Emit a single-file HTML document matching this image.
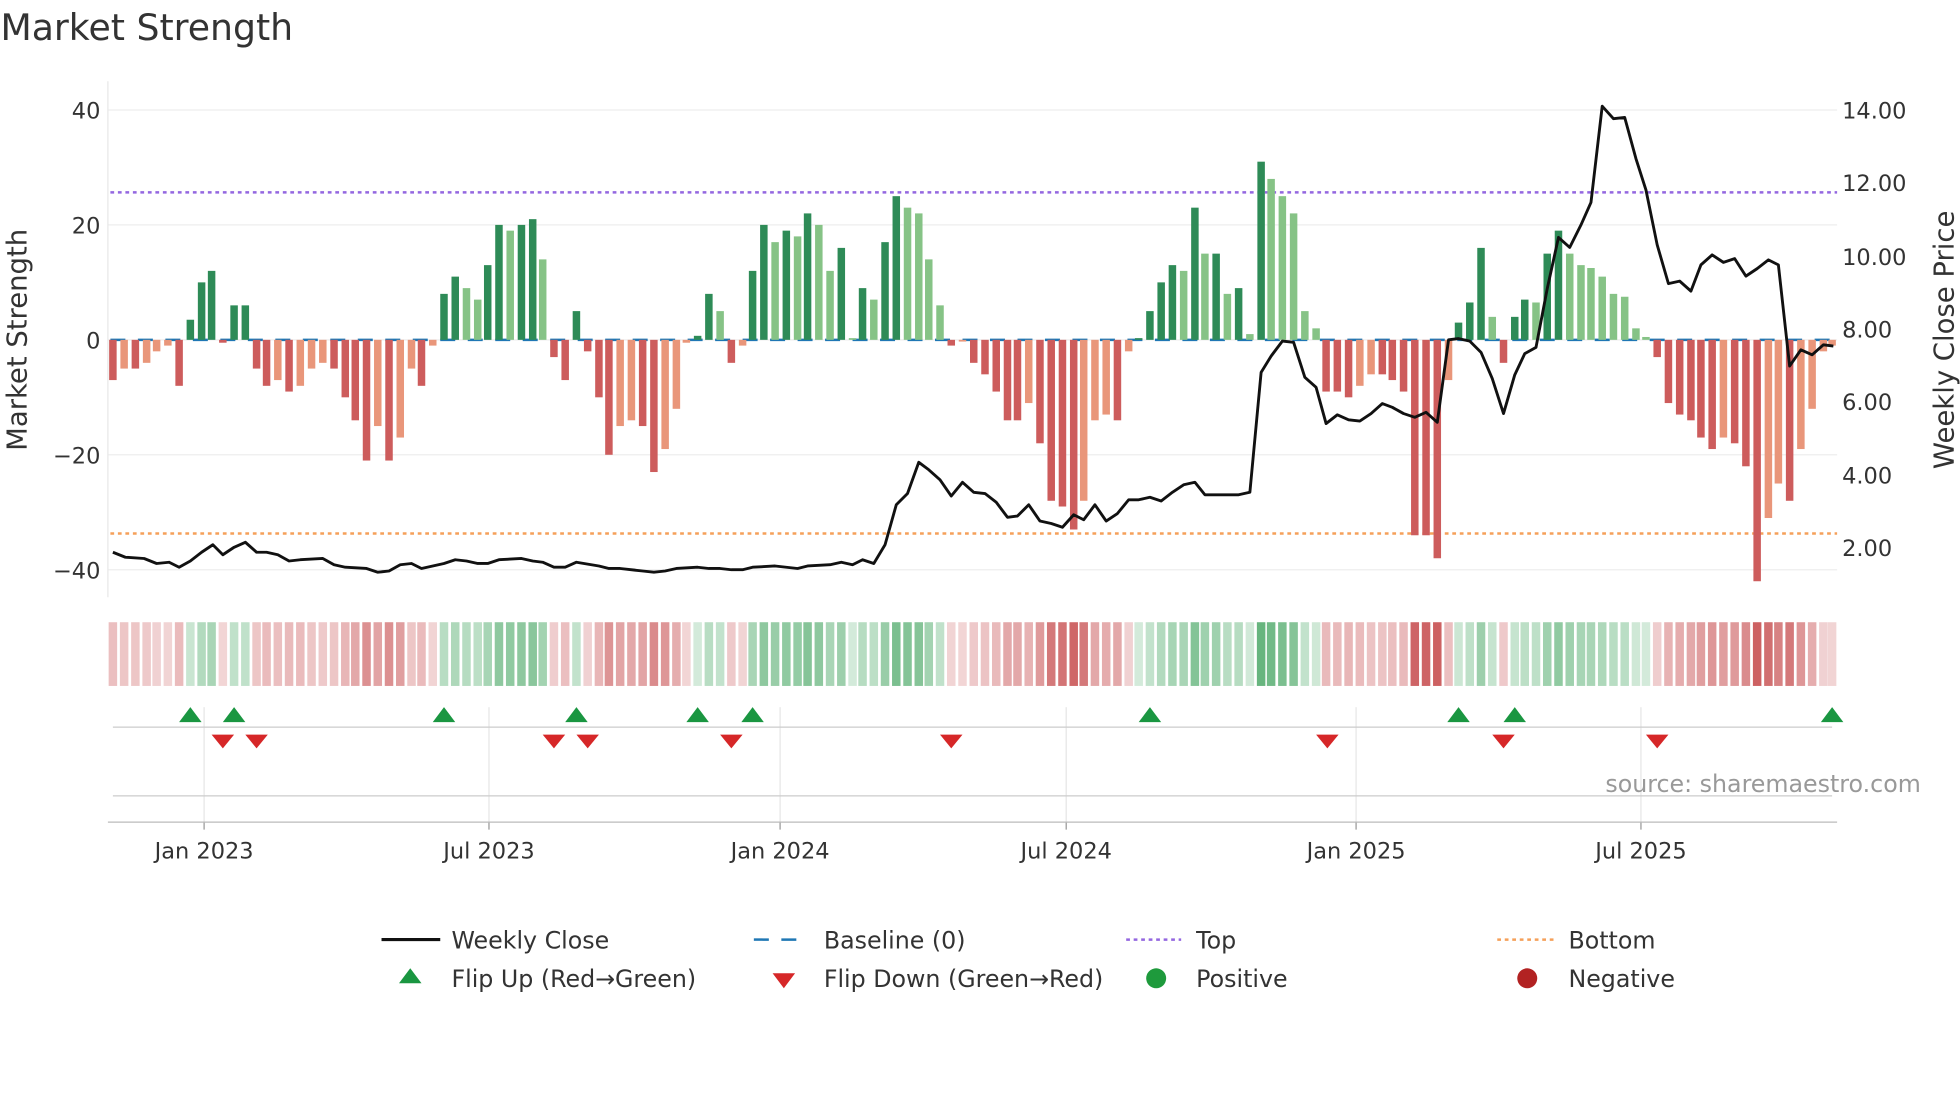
<!DOCTYPE html>
<html><head><meta charset="utf-8"><style>
html,body{margin:0;padding:0;background:#fff;}
svg{display:block;}
text{font-family:"DejaVu Sans","Liberation Sans",sans-serif;fill:#333;}
</style></head><body>
<svg id="s" width="1960" height="1102" viewBox="0 0 1568 882" xmlns="http://www.w3.org/2000/svg">
<rect width="1568" height="882" fill="#fff"/>
<text x="0" y="32" font-size="29" fill="#333">Market Strength</text>
<g id="grid"></g>
<g id="bars"></g>
<g id="heat"></g>
<g id="marks"></g>
<text x="1537" y="634" font-size="19" text-anchor="end" style="fill:#999">source: sharemaestro.com</text>
<g font-size="18">
<text x="80" y="95" text-anchor="end">40</text>
<text x="80" y="187" text-anchor="end">20</text>
<text x="80" y="279" text-anchor="end">0</text>
<text x="80" y="371" text-anchor="end">−20</text>
<text x="80" y="463" text-anchor="end">−40</text>
<text x="1474" y="95">14.00</text>
<text x="1474" y="153">12.00</text>
<text x="1474" y="212">10.00</text>
<text x="1474" y="270">8.00</text>
<text x="1474" y="328">6.00</text>
<text x="1474" y="387">4.00</text>
<text x="1474" y="445">2.00</text>
<text x="163" y="687" text-anchor="middle">Jan 2023</text>
<text x="391" y="687" text-anchor="middle">Jul 2023</text>
<text x="624" y="687" text-anchor="middle">Jan 2024</text>
<text x="853" y="687" text-anchor="middle">Jul 2024</text>
<text x="1085" y="687" text-anchor="middle">Jan 2025</text>
<text x="1313" y="687" text-anchor="middle">Jul 2025</text>
</g>
<text font-size="22" transform="translate(21,272) rotate(-90)" text-anchor="middle">Market Strength</text>
<text font-size="22" transform="translate(1563,272) rotate(-90)" text-anchor="middle">Weekly Close Price</text>
<g font-size="19">
<line x1="305" y1="752" x2="352" y2="752" stroke="#111" stroke-width="2.5"/>
<text x="361" y="759">Weekly Close</text>
<line x1="603" y1="752" x2="645" y2="752" stroke="#1f77b4" stroke-width="2" stroke-dasharray="12,10"/>
<text x="659" y="759">Baseline (0)</text>
<line x1="901" y1="752" x2="945" y2="752" stroke="#9467e0" stroke-width="2" stroke-dasharray="3,3"/>
<text x="957" y="759">Top</text>
<line x1="1198" y1="752" x2="1243" y2="752" stroke="#f5a05a" stroke-width="2" stroke-dasharray="3,3"/>
<text x="1255" y="759">Bottom</text>
<polygon points="328,775 319,787 337,787" fill="#1a9641"/>
<text x="361" y="790">Flip Up (Red→Green)</text>
<polygon points="618,779 636,779 627,791" fill="#d62728"/>
<text x="659" y="790">Flip Down (Green→Red)</text>
<circle cx="925" cy="783" r="8" fill="#1e9a3c"/>
<text x="957" y="790">Positive</text>
<circle cx="1222" cy="783" r="8" fill="#b22222"/>
<text x="1255" y="790">Negative</text>
</g>
<g id="price"></g>
</svg>
<script>
var NS="http://www.w3.org/2000/svg";
function el(p,t,a){var e=document.createElementNS(NS,t);for(var k in a)e.setAttribute(k,a[k]);document.getElementById(p).appendChild(e);return e;}
var d=[[90,-7],[99,-5],[108,-5],[117,-4],[125,-2],[134,-1],[143,-8],[152,3.5],[161,10],[169,12],[178,-0.5],[187,6],[196,6],[205,-5],[213,-8],[222,-7],[231,-9],[240,-8],[249,-5],[258,-4],[267,-5],[276,-10],[284,-14],[293,-21],[302,-15],[311,-21],[320,-17],[329,-5],[337,-8],[346,-1],[355,8],[364,11],[373,9],[382,7],[390,13],[399,20],[408,19],[417,20],[426,21],[434,14],[443,-3],[452,-7],[461,5],[470,-2],[479,-10],[487,-20],[496,-15],[505,-14],[514,-15],[523,-23],[532,-19],[541,-12],[549,-0.5],[558,0.7],[567,8],[576,5],[585,-4],[594,-1],[602,12],[611,20],[620,17],[629,19],[638,18],[646,22],[655,20],[664,12],[673,16],[682,0.3],[690,9],[699,7],[708,17],[717,25],[726,23],[735,22],[743,14],[752,6],[761,-1],[770,-0.3],[779,-4],[788,-6],[797,-9],[806,-14],[814,-14],[823,-11],[832,-18],[841,-28],[850,-29],[859,-33],[867,-28],[876,-14],[885,-13],[894,-14],[903,-2],[911,0.3],[920,5],[929,10],[938,13],[947,12],[956,23],[964,15],[973,15],[982,8],[991,9],[1000,1],[1009,31],[1017,28],[1026,25],[1035,22],[1044,5],[1053,2],[1061,-9],[1070,-9],[1079,-10],[1088,-8],[1097,-6],[1106,-6],[1114,-7],[1123,-9],[1132,-34],[1141,-34],[1150,-38],[1159,-7],[1167,3],[1176,6.5],[1185,16],[1194,4],[1203,-4],[1212,4],[1220,7],[1229,6.5],[1238,15],[1247,19],[1256,15],[1265,13],[1273,12.5],[1282,11],[1291,8],[1300,7.5],[1309,2],[1317,0.5],[1326,-3],[1335,-11],[1344,-13],[1353,-14],[1361,-17],[1370,-19],[1379,-17],[1388,-18],[1397,-22],[1406,-42],[1415,-31],[1423,-25],[1432,-28],[1441,-19],[1450,-12],[1459,-2],[1466,-1]];
var Y0=272,K=4.6;
[88,180,272,364,456].forEach(function(y){el("grid","line",{x1:86,x2:1470,y1:y,y2:y,stroke:"#eee","stroke-width":1});});
[163,391,624,853,1085,1313].forEach(function(x){el("grid","line",{x1:x,x2:x,y1:566,y2:658,stroke:"#e6e6e6","stroke-width":1});el("grid","line",{x1:x,x2:x,y1:658,y2:664,stroke:"#999"});});
el("grid","line",{x1:86,x2:86,y1:65,y2:478,stroke:"#e8e8e8"});
el("grid","line",{x1:90,x2:1466,y1:582,y2:582,stroke:"#ccc"});
el("grid","line",{x1:90,x2:1466,y1:637,y2:637,stroke:"#ccc"});
el("grid","line",{x1:86,x2:1470,y1:658,y2:658,stroke:"#bbb"});
el("grid","line",{x1:88,x2:1470,y1:272,y2:272,stroke:"#1f77b4","stroke-width":2,"stroke-dasharray":"12,10"});
el("grid","line",{x1:88,x2:1470,y1:154,y2:154,stroke:"#9467e0","stroke-width":2,"stroke-dasharray":"3,3"});
el("grid","line",{x1:88,x2:1470,y1:427,y2:427,stroke:"#f5a05a","stroke-width":2,"stroke-dasharray":"3,3"});
for(var i=0;i<d.length;i++){
 var x=d[i][0],v=d[i][1],p=i?d[i-1][1]:0;
 var strong=(v*p>0)?Math.abs(v)>=Math.abs(p):true;
 var c=v>=0?(strong?"#2e8b57":"#86c386"):(strong?"#cd5c5c":"#e9967a");
 var h=Math.abs(v)*K;
 el("bars","rect",{x:x-3,y:v>=0?Y0-h:Y0,width:6,height:Math.max(h,1),fill:c});
 el("heat","rect",{x:x-3.4,y:498,width:6.8,height:51,fill:v>=0?"#2e9a4e":"#c0393b","fill-opacity":(0.2+0.6*Math.min(1,Math.abs(v)/35)).toFixed(2)});
}
var up=[152,187,355,461,558,602,920,1167,1212,1466],dn=[178,205,443,470,585,761,1062,1203,1326];
up.forEach(function(x){el("marks","polygon",{points:(x)+",566 "+(x-9)+",578 "+(x+9)+",578",fill:"#1a9641"});});
dn.forEach(function(x){el("marks","polygon",{points:(x-9)+",588 "+(x+9)+",588 "+x+",599",fill:"#d62728"});});
var pr="90:442,100:446,115:447,125:451,135:450,143:454,152:449,161:442,170:436,178:444,187:438,196:434,205:442,213:442,222:444,231:449,240:448,258:447,267:452,276:454,293:455,302:458,311:457,320:452,329:451,337:455,355:451,364:448,373:449,382:451,390:451,399:448,417:447,426:449,434:450,443:454,452:454,461:450,479:453,487:455,496:455,514:457,523:458,532:457,541:455,558:454,567:455,576:455,585:456,594:456,602:454,620:453,629:454,638:455,646:453,664:452,673:450,682:452,690:448,699:451,708:436,717:404,726:395,735:370,743:376,752:384,761:397,770:386,779:394,788:395,797:402,806:414,814:413,823:404,832:417,841:419,850:422,859:412,867:416,876:404,885:417,894:411,903:400,911:400,920:398,929:401,938:394,947:388,956:386,964:396,973:396,991:396,1000:394,1009:298,1017:285,1026:273,1035:274,1044:302,1053:310,1061:339,1070:332,1079:336,1088:337,1097:331,1106:323,1114:326,1123:331,1132:334,1141:330,1150:338,1159:272,1167:271,1176:273,1185:282,1194:303,1203:331,1212:300,1220:283,1229:278,1238:231,1247:190,1256:198,1265:180,1273:162,1282:85,1291:95,1300:94,1309:127,1317:152,1326:196,1335:227,1344:225,1353:233,1361:212,1370:204,1379:210,1388:207,1397:221,1406:215,1415:208,1423:212,1432:293,1441:280,1450:284,1459:276,1467:277";
el("price","polyline",{points:pr.replace(/:/g,",").split(",").reduce(function(a,v,i,arr){if(i%2==0)a.push(v+","+arr[i+1]);return a;},[]).join(" "),fill:"none",stroke:"#111","stroke-width":2.3,"stroke-linejoin":"round"});
</script>
</body></html>
